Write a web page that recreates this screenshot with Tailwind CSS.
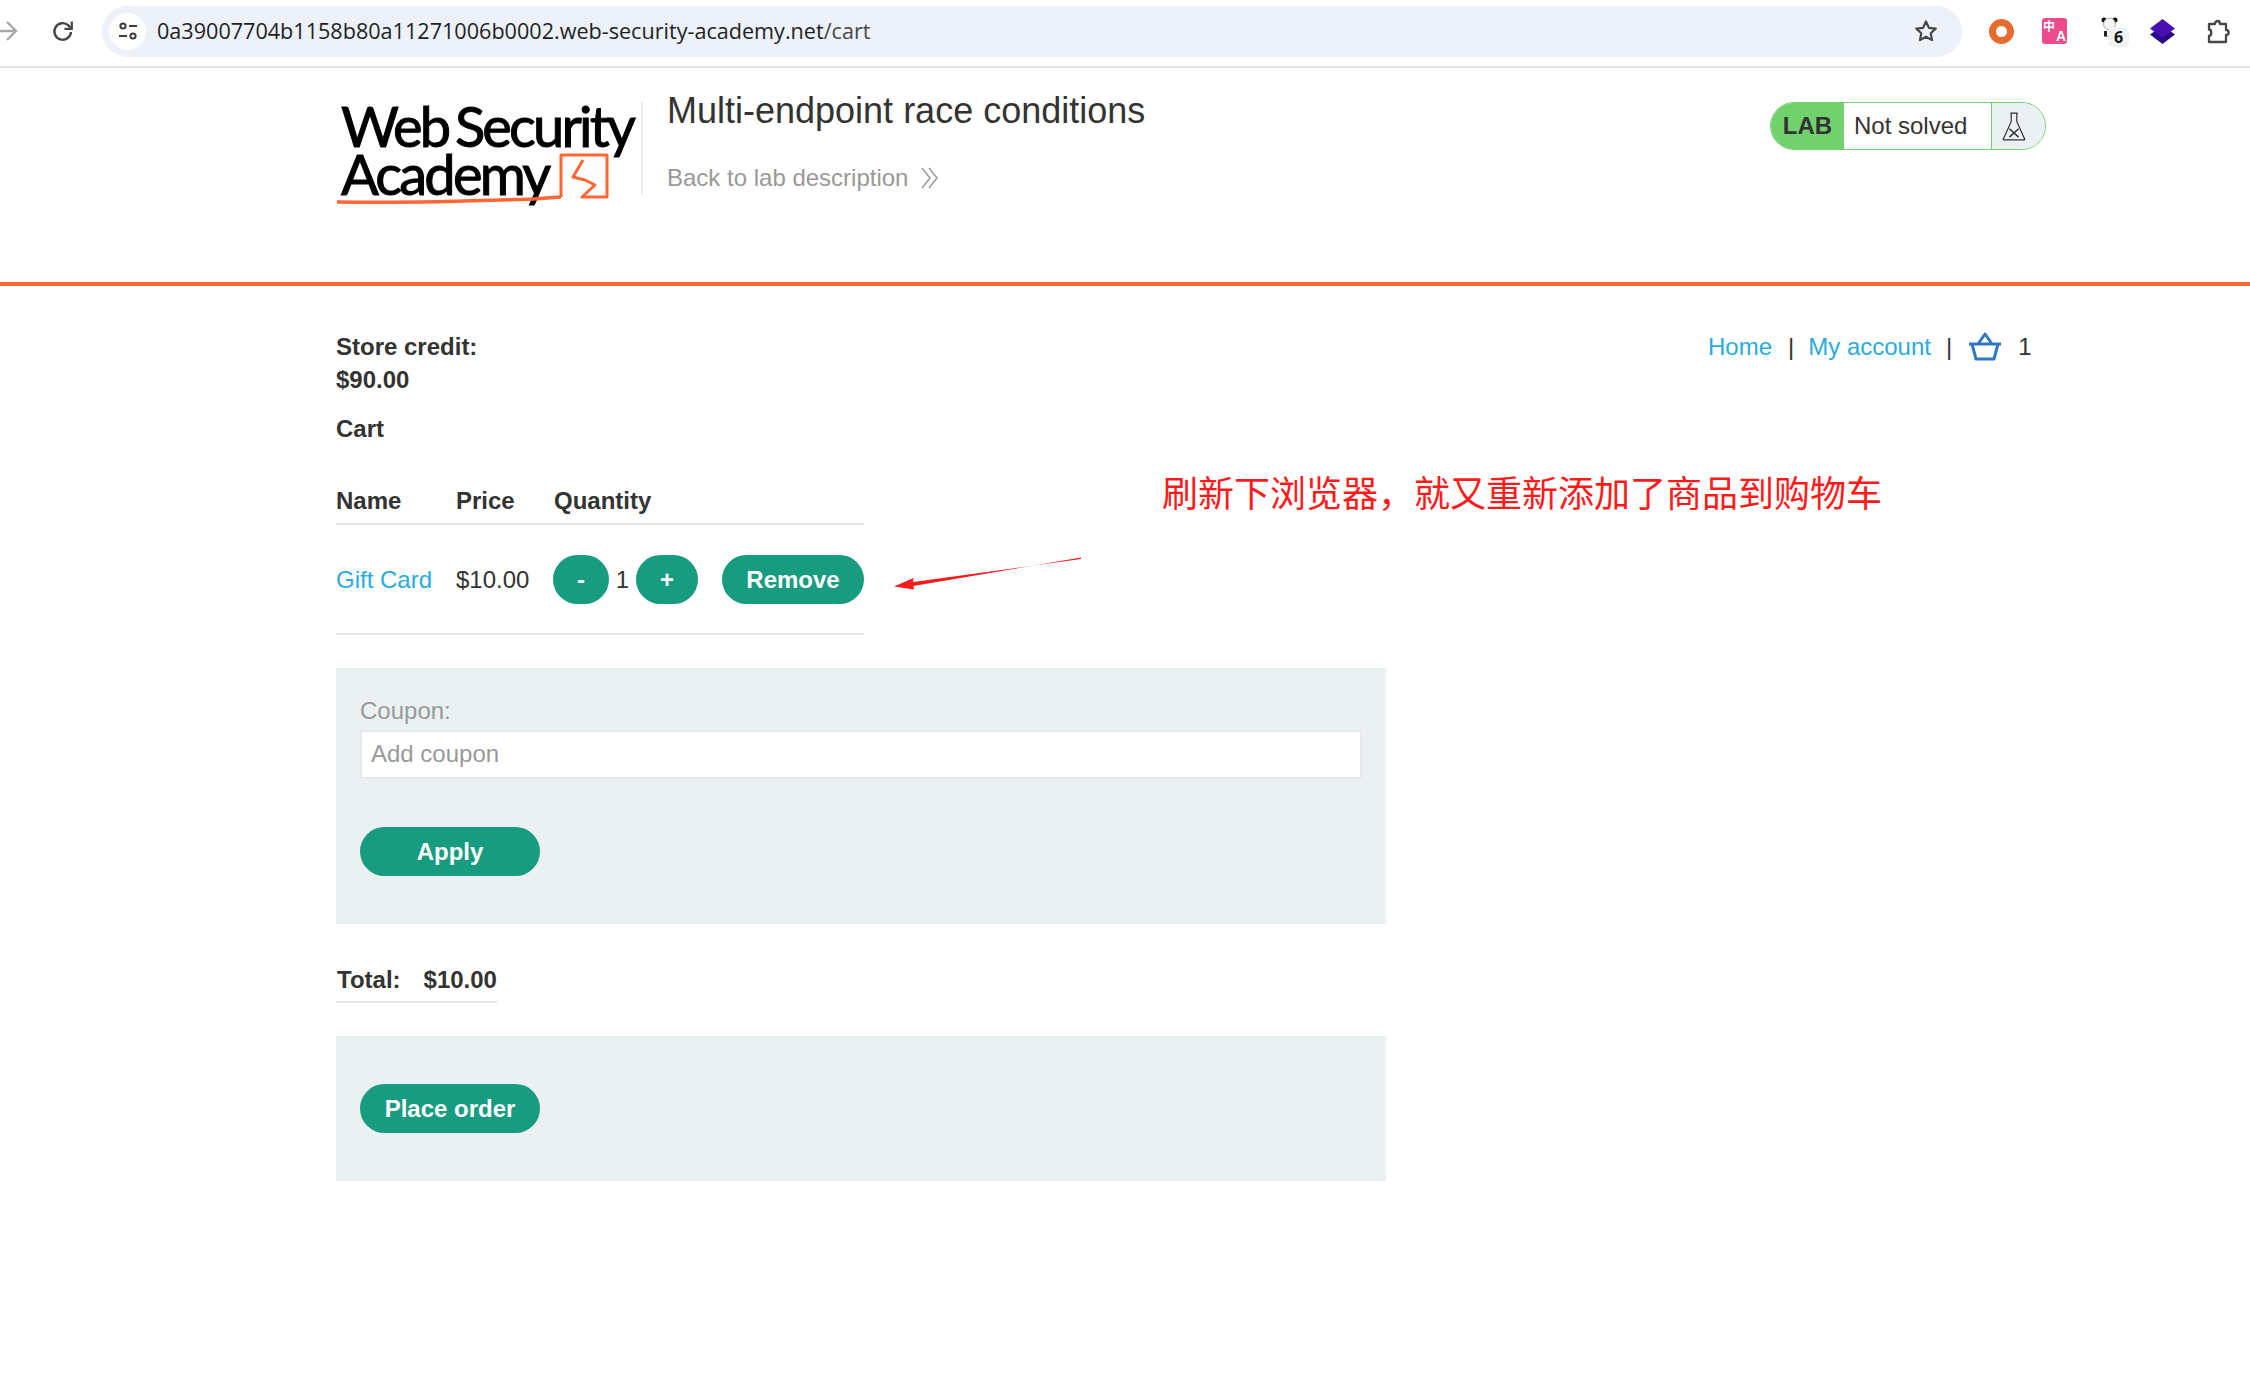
<!DOCTYPE html>
<html lang="en">
<head>
    <meta charset="UTF-8">
    <meta name="viewport" content="width=device-width, initial-scale=1.0">
    <title>Multi-endpoint race conditions</title>
    <script src="https://cdn.jsdelivr.net/npm/@tailwindcss/browser@4"></script>
</head>
<body class="relative bg-white min-h-screen overflow-hidden font-['Liberation_Sans',Arial,sans-serif] text-[24px] text-[#333332]">

    <!-- browser toolbar -->
    <div class="flex items-center h-[68px] pb-[4px] border-b-2 border-[#e2e2e2]">
        <svg class="w-[20px] h-[24px] ml-[-1px] shrink-0" viewBox="0 0 20 24" fill="none" stroke="#a8a8a8" stroke-width="2.4">
            <path d="M0 12h17M8 3l9 9-9 9"></path>
        </svg>
        <svg class="w-[24px] h-[24px] ml-[32px] shrink-0" viewBox="0 0 24 24" fill="none" stroke="#474747" stroke-width="2.4">
            <path d="M20 13a8.3 8.3 0 1 1-2.6-6.6L20 9"></path>
            <path d="M20.8 2.5v7.3h-7.3" stroke-width="2.2"></path>
        </svg>
        <div class="flex items-center w-[1860px] h-[51px] ml-[27px] pl-[7px] pr-[24px] rounded-full bg-[#ecf1fa] shrink-0">
            <div class="flex items-center justify-center w-[37px] h-[37px] rounded-full bg-white">
                <svg class="w-[20px] h-[20px]" viewBox="0 0 20 20" fill="none" stroke="#3c3c3c" stroke-width="2">
                    <circle cx="5" cy="5" r="2.6"></circle>
                    <path d="M11 5h8M1 15h8"></path>
                    <circle cx="15" cy="15" r="2.6"></circle>
                </svg>
            </div>
            <span class="ml-[11px] font-['Open_Sans',sans-serif] text-[21.6px] text-[#1f1f1f] whitespace-nowrap">0a39007704b1158b80a11271006b0002.web-security-academy.net<span class="text-[#474747]">/cart</span></span>
            <svg class="w-[24px] h-[24px] ml-auto" viewBox="0 0 24 24" fill="none" stroke="#474747" stroke-width="2.2" stroke-linejoin="round">
                <path d="M12 2.5l2.9 6.3 6.8.8-5 4.7 1.3 6.8-6-3.4-6 3.4 1.3-6.8-5-4.7 6.8-.8z"></path>
            </svg>
        </div>
        <!-- extensions -->
        <div class="w-[25px] h-[25px] ml-[27px] rounded-full border-[7px] border-[#e56b2f] shrink-0"></div>
        <div class="relative w-[25px] h-[26px] ml-[28px] rounded-[3px] bg-[#ee4b8b] shrink-0 text-white font-bold font-['Noto_Sans_CJK_SC',sans-serif]">
            <span class="absolute left-[1px] top-[1px] text-[12px] leading-[14px]">中</span>
            <span class="absolute right-[1px] bottom-[1px] text-[14px] leading-[14px] font-['Liberation_Sans',sans-serif]">A</span>
        </div>
        <div class="relative w-[28px] h-[32px] ml-[34px] shrink-0">
            <svg class="absolute left-0 top-[2px] w-[17px] h-[20px]" viewBox="0 0 17 20">
                <circle cx="3" cy="3" r="2.5" fill="#111"></circle>
                <circle cx="14" cy="3" r="2.5" fill="#111"></circle>
                <circle cx="8.5" cy="7" r="6" fill="#f4f4f4" stroke="#777" stroke-width=".6"></circle>
                <path d="M3 14h3v5H3z" fill="#222"></path>
                <path d="M3 19.500h12" stroke="#888" stroke-width="1"></path>
            </svg>
            <div class="absolute left-[7px] top-[12px] w-[21px] h-[20px] rounded-[5px] bg-[#f1f3f4] text-center text-[16px] leading-[20px] font-bold text-[#111] font-['Open_Sans',sans-serif]">6</div>
        </div>
        <svg class="w-[25px] h-[25px] ml-[21px] shrink-0" viewBox="0 0 25 25">
            <path d="M12.500 7L25 15.500 12.500 25 0 15.500z" fill="#2a0a80"></path>
            <path d="M12.500 0L25 9.500 12.500 19 0 9.500z" fill="#4a0fb0"></path>
        </svg>
        <svg class="w-[24px] h-[25px] ml-[32px] shrink-0" viewBox="0 0 24 25" fill="none" stroke="#474747" stroke-width="2.300" stroke-linejoin="round">
            <path d="M2 5h6c0-4 5-4 5 0h6v6c3.500 0 3.500 5 0 5v7H2v-6c3 0 3-6.500 0-6.500z"></path>
        </svg>
    </div>

    <!-- lab header -->
    <header class="flex h-[218px] pl-[336px] pr-[204px] border-b-4 border-[#ff6633]">
        <div class="relative w-[307px] h-[93px] mt-[34px] pl-[5px] border-r-2 border-[#ececec] font-['Lato',sans-serif] text-black text-[56px] leading-[48px] tracking-[-2.800px] [word-spacing:-5px] [-webkit-text-stroke:1px_#000] shrink-0">
            <div class="whitespace-nowrap">Web Security</div>
            <div class="whitespace-nowrap">Academy</div>
            <svg class="absolute left-0 top-[50px] w-[280px] h-[54px]" viewBox="0 0 280 54" fill="none" stroke="#ff6633" stroke-linejoin="round">
                <path d="M1 50c60 1 140-1 196-3l28-2" stroke-width="3.500"></path>
                <path d="M225 45V3h46v42h-25l13-12-10-5-12-3 10-17" stroke-width="3"></path>
            </svg>
        </div>
        <div class="pl-[24px]">
            <h2 class="mt-[23px] text-[36px] leading-[40px] whitespace-nowrap">Multi-endpoint race conditions</h2>
            <a class="flex items-center mt-[33px] text-[24px] leading-[28px] text-[#999999]" href="#">
                Back to lab description
                <svg class="w-[20px] h-[22px] ml-[12px]" viewBox="0 0 20 22" fill="none" stroke="#999999" stroke-width="1.500">
                    <path d="M2 1l8 10-8 10M9 1l8 10-8 10"></path>
                </svg>
            </a>
        </div>
        <div class="flex items-stretch w-[276px] h-[48px] mt-[34px] ml-auto rounded-[24px] border border-[#70d16d] overflow-hidden">
            <div class="flex items-center justify-center w-[73px] bg-[#70d16d] font-bold text-[24px]">LAB</div>
            <div class="flex items-center flex-1 pl-[10px] text-[24px] text-[#333332]">Not solved</div>
            <div class="flex items-center justify-center w-[54px] pr-[9px] bg-[#ebf0f2] border-l border-[#70d16d]">
                <svg class="w-[24px] h-[30px]" viewBox="0 0 26 32" fill="none" stroke="#333332" stroke-width="1.300">
                    <path d="M9 2h8M10 2v9L2 29a1 1 0 0 0 1 2h20a1 1 0 0 0 1-2L16 11V2"></path>
                    <path d="M8 19l10 9M18 19L8 28" stroke-width="1.600"></path>
                </svg>
            </div>
        </div>
    </header>

    <!-- cart page -->
    <main class="w-[1050px] ml-[336px] leading-[33px]">
        <div class="relative pt-[44px] font-bold">
            <p>Store credit:</p>
            <p>$90.00</p>
            <nav class="absolute left-[1372px] top-[44px] flex items-center font-normal whitespace-nowrap">
                <a class="text-[#29abe2]" href="#">Home</a>
                <span class="ml-[16px]">|</span>
                <a class="ml-[14px] text-[#29abe2]" href="#">My account</a>
                <span class="ml-[15px]">|</span>
                <svg class="w-[34px] h-[29px] ml-[16px]" viewBox="0 0 34 29" fill="none" stroke="#2f78bf" stroke-width="3" stroke-linejoin="round">
                    <path d="M1 12h32M4 12l4 15h18l4-15M10 12l7-10 7 10"></path>
                </svg>
                <span class="ml-[16px]">1</span>
            </nav>
        </div>
        <p class="mt-[16px] font-bold">Cart</p>

        <table class="w-[528px] mt-[32px] table-fixed border-collapse text-left">
            <colgroup><col class="w-[120px]"><col class="w-[98px]"><col></colgroup>
            <thead>
                <tr class="h-[47px] border-b-2 border-[#e6e6e6] font-bold">
                    <th class="align-middle">Name</th>
                    <th class="align-middle">Price</th>
                    <th class="align-middle">Quantity</th>
                </tr>
            </thead>
            <tbody>
                <tr class="h-[110px] border-b-2 border-[#e6e6e6]">
                    <td><a class="text-[#29abe2]" href="#">Gift Card</a></td>
                    <td>$10.00</td>
                    <td>
                        <div class="flex items-center">
                            <button class="w-[56px] h-[49px] ml-[-1px] rounded-[25px] bg-[#179c80] text-white font-bold">-</button>
                            <span class="w-[27px] text-center">1</span>
                            <button class="w-[62px] h-[49px] rounded-[25px] bg-[#179c80] text-white font-bold">+</button>
                            <button class="w-[142px] h-[49px] ml-[24px] rounded-[25px] bg-[#179c80] text-white font-bold">Remove</button>
                        </div>
                    </td>
                </tr>
            </tbody>
        </table>

        <form class="h-[256px] mt-[33px] pt-[26px] px-[24px] bg-[#ebf0f2]">
            <label class="block text-[#999999]">Coupon:</label>
            <input class="block w-full h-[49px] mt-[3px] px-[9px] pb-[2px] bg-white border-2 border-[#e6eaec] placeholder:text-[#999999]" placeholder="Add coupon">
            <button class="block w-[180px] h-[49px] mt-[48px] rounded-[25px] bg-[#179c80] text-white font-bold" type="button">Apply</button>
        </form>

        <div class="inline-block mt-[39px] pb-[5px] border-b-2 border-[#e6e6e6] font-bold">
            <span class="ml-[1px]">Total:</span><span class="ml-[23px]">$10.00</span>
        </div>

        <div class="h-[145px] mt-[33px] pt-[48px] px-[24px] bg-[#ebf0f2]">
            <button class="w-[180px] h-[49px] rounded-[25px] bg-[#179c80] text-white font-bold">Place order</button>
        </div>
    </main>

    <!-- red annotation drawn over the screenshot -->
    <div class="absolute left-[1162px] top-[468px] text-[36px] leading-[46px] text-[#ff1a1a] whitespace-nowrap font-['Noto_Sans_CJK_SC',sans-serif] font-normal">刷新下浏览器，就又重新添加了商品到购物车</div>
    <svg class="absolute left-[890px] top-[552px] w-[195px] h-[42px]" viewBox="0 0 195 42">
        <path d="M191 5.500v1.500L23 30l.5-4L4 34.500l20 3-.6-3.500z" fill="#f51c1c"></path>
    </svg>
</body>
</html>
